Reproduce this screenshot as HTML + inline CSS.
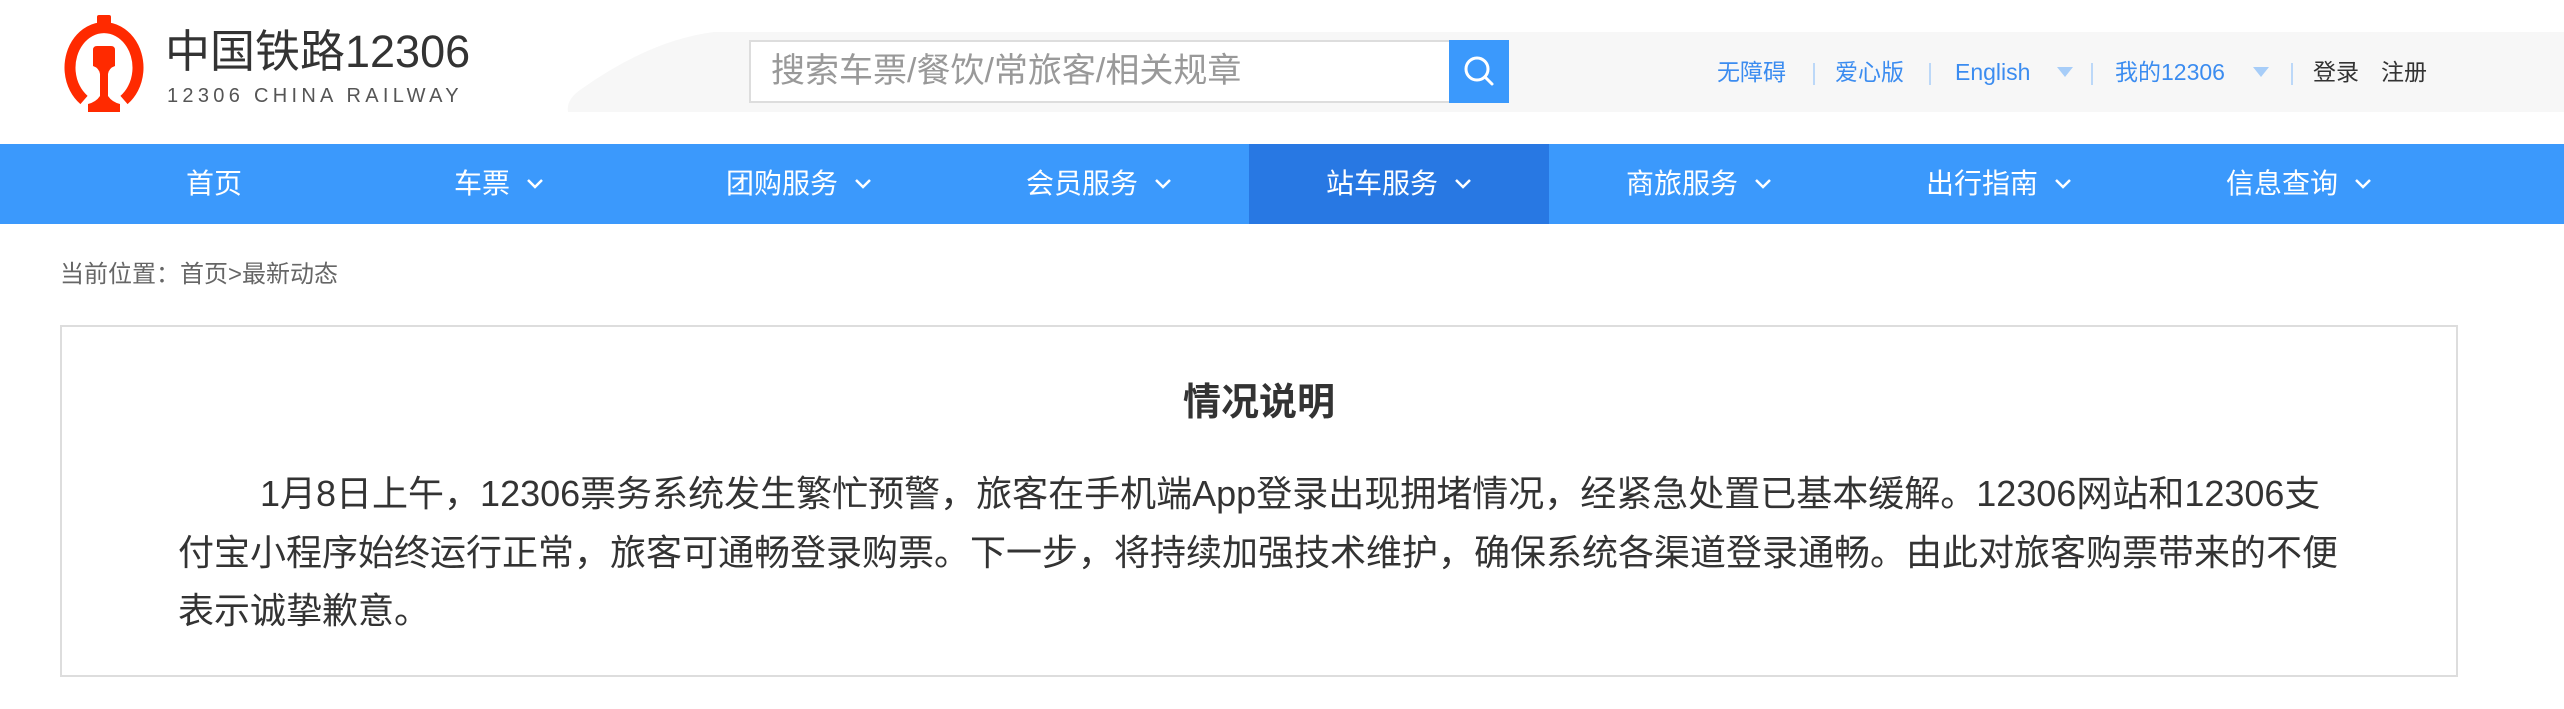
<!DOCTYPE html>
<html><head><meta charset="utf-8"><style>
*{margin:0;padding:0;box-sizing:border-box}
body{width:2564px;height:709px;background:#fff;font-family:"Liberation Sans","Noto Sans CJK SC",sans-serif;position:relative;overflow:hidden;color:#333}
.abs{position:absolute}
.logo-t{left:165px;top:22px;font-size:45px;color:#333;line-height:60px;white-space:nowrap}
.logo-s{left:167px;top:84px;font-size:20px;color:#555;letter-spacing:4.3px;line-height:24px;white-space:nowrap}
.search{left:749px;top:40px;width:702px;height:63px;border:2px solid #ddd;background:#fff;font-size:34px;color:#999;padding-left:20px;line-height:58px;white-space:nowrap}
.btn{left:1449px;top:40px;width:60px;height:63px;background:#3b99fc}
.links{top:55px;left:1717px;font-size:23px;line-height:34px;white-space:nowrap;color:#3b8cf0}
.links span{position:absolute;top:0}
.sep{color:#b8d6f8}
.tri{width:0;height:0;border-left:8px solid transparent;border-right:8px solid transparent;border-top:10px solid #a7cdf8;top:12px!important}
.nav{left:0;top:144px;width:2564px;height:80px;background:#3b99fc}
.ni{position:absolute;top:0;width:300px;height:80px;color:#fff;font-size:28px;line-height:80px;text-align:center;white-space:nowrap}
.ni svg{vertical-align:middle;margin-left:16px;margin-top:-4px}
.act{background:#2878e3}
.bc{left:60px;top:261px;font-size:24px;color:#666;line-height:28px;white-space:nowrap}
.box{left:60px;top:325px;width:2398px;height:352px;border:2px solid #ddd}
.title{left:60px;top:380px;width:2398px;text-align:center;font-size:38px;font-weight:bold;line-height:46px;color:#333}
.p{left:178px;font-size:36px;line-height:44px;white-space:nowrap;color:#333}
</style></head><body>
<svg class="abs" style="left:0;top:0" width="2564" height="130">
<path d="M714 32 L2564 32 L2564 112 L568 112 Q566 100 580 90 Q650 40 714 32 Z" fill="#f7f7f7"/>
<path d="M84 100 A34 40 0 1 1 124 100" fill="none" stroke="#ff2a00" stroke-width="11"/>
<rect x="97" y="15" width="14" height="10" rx="2" fill="#ff2a00"/>
<path d="M93 50 Q93 46 97 46 L111 46 Q115 46 115 50 L115 66 Q109 68 108 74 L108 96 Q112 102 120 104 L120 112 L88 112 L88 104 Q96 102 100 96 L100 74 Q99 68 93 66 Z" fill="#ff2a00"/>
</svg>
<div class="abs logo-t">中国铁路12306</div>
<div class="abs logo-s">12306 CHINA RAILWAY</div>
<div class="abs search">搜索车票/餐饮/常旅客/相关规章</div>
<div class="abs btn"><svg width="60" height="63"><circle cx="28" cy="29" r="11" fill="none" stroke="#fff" stroke-width="3"/><line x1="36" y1="37" x2="43" y2="44" stroke="#fff" stroke-width="3" stroke-linecap="round"/></svg></div>
<div class="abs links">
<span style="left:0">无障碍</span><span class="sep" style="left:94px">|</span>
<span style="left:118px">爱心版</span><span class="sep" style="left:210px">|</span>
<span style="left:238px">English</span><span class="tri" style="left:340px"></span><span class="sep" style="left:372px">|</span>
<span style="left:398px">我的12306</span><span class="tri" style="left:536px"></span><span class="sep" style="left:572px">|</span>
<span style="left:596px;color:#333">登录</span><span style="left:664px;color:#333">注册</span>
</div>
<div class="abs nav">
<div class="ni" style="left:64px">首页</div>
<div class="ni" style="left:349px">车票<svg width="18" height="12"><path d="M2 2 L9 9 L16 2" fill="none" stroke="#fff" stroke-width="2.5"/></svg></div>
<div class="ni" style="left:649px">团购服务<svg width="18" height="12"><path d="M2 2 L9 9 L16 2" fill="none" stroke="#fff" stroke-width="2.5"/></svg></div>
<div class="ni" style="left:949px">会员服务<svg width="18" height="12"><path d="M2 2 L9 9 L16 2" fill="none" stroke="#fff" stroke-width="2.5"/></svg></div>
<div class="ni act" style="left:1249px">站车服务<svg width="18" height="12"><path d="M2 2 L9 9 L16 2" fill="none" stroke="#fff" stroke-width="2.5"/></svg></div>
<div class="ni" style="left:1549px">商旅服务<svg width="18" height="12"><path d="M2 2 L9 9 L16 2" fill="none" stroke="#fff" stroke-width="2.5"/></svg></div>
<div class="ni" style="left:1849px">出行指南<svg width="18" height="12"><path d="M2 2 L9 9 L16 2" fill="none" stroke="#fff" stroke-width="2.5"/></svg></div>
<div class="ni" style="left:2149px">信息查询<svg width="18" height="12"><path d="M2 2 L9 9 L16 2" fill="none" stroke="#fff" stroke-width="2.5"/></svg></div>
</div>
<div class="abs bc">当前位置：首页&gt;最新动态</div>
<div class="abs box"></div>
<div class="abs title">情况说明</div>
<div class="abs p" style="top:472px;left:260px">1月8日上午，12306票务系统发生繁忙预警，旅客在手机端App登录出现拥堵情况，经紧急处置已基本缓解。12306网站和12306支</div>
<div class="abs p" style="top:531px">付宝小程序始终运行正常，旅客可通畅登录购票。下一步，将持续加强技术维护，确保系统各渠道登录通畅。由此对旅客购票带来的不便</div>
<div class="abs p" style="top:589px">表示诚挚歉意。</div>
</body></html>
